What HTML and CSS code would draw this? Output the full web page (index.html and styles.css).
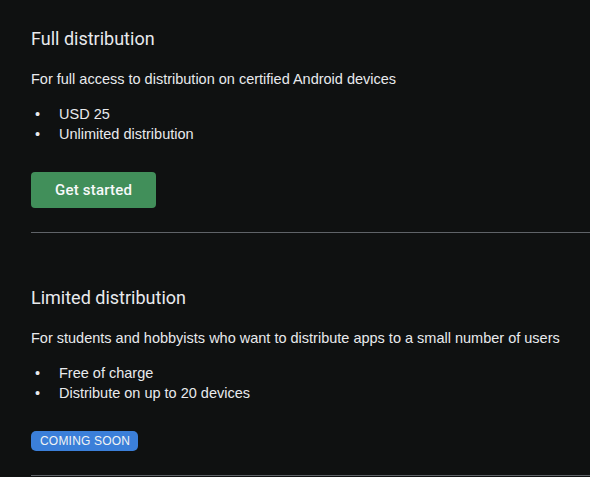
FILE: index.html
```html
<!DOCTYPE html>
<html lang="en">
<head>
  <meta charset="UTF-8" />
  <title>Choose distribution</title>
  <link rel="stylesheet" href="styles.css">
</head>
<body>
  <div class="plans">
    <div class="plan plan-first">
      <h2 class="plan-title">Full distribution</h2>
      <p class="plan-desc">For full access to distribution on certified Android devices</p>
      <ul class="plan-points">
        <li>USD 25</li>
        <li>Unlimited distribution</li>
      </ul>
      <a href="#start" class="start-btn">Get started</a>
    </div>

    <div class="plan">
      <h2 class="plan-title">Limited distribution</h2>
      <p class="plan-desc">For students and hobbyists who want to distribute apps to a small number of users</p>
      <ul class="plan-points">
        <li>Free of charge</li>
        <li>Distribute on up to 20 devices</li>
      </ul>
      <span class="soon-badge">Coming soon</span>
    </div>
  </div>
</body>
</html>
```

FILE: styles.css
```css
body {
  font-family: "Liberation Sans", Arial, sans-serif;
  margin: 0;
  padding: 0;
  background-color: #0f1111;
  color: #e8eaed;
}
.plans {
  padding-left: 31px;
}
.plan {
  padding-top: 53px;
  padding-bottom: 24px;
  border-bottom: 1px solid #5f6368;
}
.plan-first {
  padding-top: 27px;
}
.plan-title {
  font-family: Roboto, "Noto Sans", sans-serif;
  font-size: 18px;
  font-weight: 400;
  line-height: 24px;
  margin: 0 0 17px;
}
.plan-desc {
  font-size: 14.5px;
  line-height: 20px;
  margin: 0 0 15px;
  padding-top: 1px;
}
.plan-points {
  list-style: none;
  margin: 0 0 28px;
  padding: 0;
  font-size: 14.5px;
  line-height: 20px;
}
.plan-points li {
  display: flex;
}
.plan-points li::before {
  content: "\2022";
  width: 28px;
  padding-left: 4px;
  box-sizing: border-box;
}
.start-btn {
  display: inline-block;
  font-family: Roboto, "Noto Sans", sans-serif;
  font-size: 15px;
  font-weight: 500;
  letter-spacing: 0.2px;
  line-height: 36px;
  padding: 0 24px;
  border-radius: 4px;
  background-color: #418f5a;
  color: #f8f9fa;
  text-decoration: none;
}
.soon-badge {
  display: inline-block;
  font-size: 12px;
  line-height: 20px;
  padding: 0 8px 0 9px;
  border-radius: 5px;
  background-color: #3b7fd9;
  color: #f1f3f4;
  text-transform: uppercase;
  letter-spacing: 0.2px;
  vertical-align: top;
}
```
